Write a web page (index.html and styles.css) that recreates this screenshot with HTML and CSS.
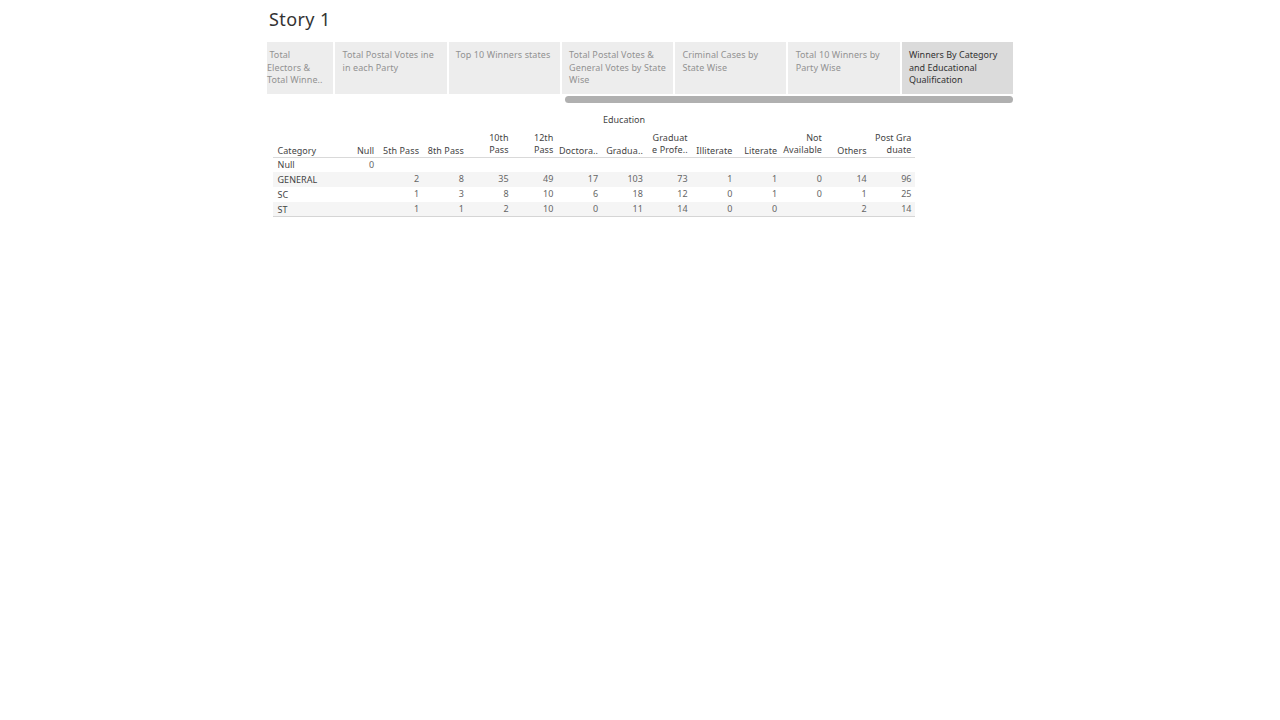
FILE: index.html
```html
<!DOCTYPE html>
<html lang="en">
<head>
<meta charset="utf-8">
<title>Story 1</title>
<link rel="stylesheet" href="styles.css">
</head>
<body>
<main class="story">
  <h1 class="title">Story 1</h1>
  <nav class="tabs">
    <div class="tab first">&nbsp;Total<br>Electors &amp;<br>Total Winne..</div>
    <div class="tab">Total Postal Votes ine<br>in each Party</div>
    <div class="tab">Top 10 Winners states</div>
    <div class="tab">Total Postal Votes &amp;<br>General Votes by State<br>Wise</div>
    <div class="tab">Criminal Cases by<br>State Wise</div>
    <div class="tab">Total 10 Winners by<br>Party Wise</div>
    <div class="tab active">Winners By Category<br>and Educational<br>Qualification</div>
  </nav>
  <div class="scroll"></div>
  <section class="sheet">
    <div class="caption">Education</div>
    <div class="row head"><b>Category</b><span>Null</span><span>5th Pass</span><span>8th Pass</span><span class="two">10th<br>Pass</span><span class="two">12th<br>Pass</span><span>Doctora..</span><span>Gradua..</span><span class="two">Graduat<br>e Profe..</span><span>Illiterate</span><span>Literate</span><span class="two">Not<br>Available</span><span>Others</span><span class="two">Post Gra<br>duate</span></div>
    <div class="row short"><b>Null</b><span>0</span><span></span><span></span><span></span><span></span><span></span><span></span><span></span><span></span><span></span><span></span><span></span><span></span></div>
    <div class="row band"><b>GENERAL</b><span></span><span>2</span><span>8</span><span>35</span><span>49</span><span>17</span><span>103</span><span>73</span><span>1</span><span>1</span><span>0</span><span>14</span><span>96</span></div>
    <div class="row"><b>SC</b><span></span><span>1</span><span>3</span><span>8</span><span>10</span><span>6</span><span>18</span><span>12</span><span>0</span><span>1</span><span>0</span><span>1</span><span>25</span></div>
    <div class="row band"><b>ST</b><span></span><span>1</span><span>1</span><span>2</span><span>10</span><span>0</span><span>11</span><span>14</span><span>0</span><span>0</span><span></span><span>2</span><span>14</span></div>
  </section>
</main>
</body>
</html>
```
FILE: styles.css
```css
body { margin: 0; background: #fff; font-family: "Noto Sans", "Open Sans", sans-serif; font-size: 9px; color: #444; }
.story { width: 746px; margin: 0 auto; }
.title { margin: 0; height: 42px; padding-left: 2px; box-sizing: border-box; font-size: 18px; line-height: 39px; font-weight: 400; letter-spacing: 0.4px; color: #333; }
.tabs { display: grid; grid-template-columns: 66.4px repeat(6, 1fr); column-gap: 2px; height: 52px; }
.tab { background: #ededed; color: #929292; padding: 7px 0 0 7.2px; line-height: 12.5px; white-space: nowrap; letter-spacing: 0.08px; }
.tab.first { padding-left: 0; }
.tab.active { background: #dbdbdb; color: #333; letter-spacing: 0; }
.scroll { width: 448px; height: 6.5px; margin: 2px 0 0 auto; border-radius: 4px; background: #b0b0b0; }
.sheet { width: 642px; margin: 9.5px 0 0 6px; }
.caption { height: 20px; line-height: 16px; padding-left: 60px; text-align: center; }
.row { display: grid; grid-template-columns: 60px repeat(13, 1fr); height: 15px; line-height: 15px; white-space: nowrap; }
.row b { font-weight: 400; padding-left: 4.5px; color: #444; letter-spacing: 0.05px; }
.row span { text-align: right; padding-right: 3.5px; color: #666; line-height: 14px; }
.row.head { height: 25px; border-bottom: 1px solid #d9d9d9; align-items: end; line-height: 12px; }
.row.head span { color: #444; line-height: 12px; letter-spacing: 0.08px; }
.row.head .two { padding-bottom: 1px; }
.row.short { height: 14px; }
.row.short b { line-height: 14px; }
.band { background: #f5f5f5; }
.row:last-child { border-bottom: 1px solid #d5d5d5; height: 14px; }
```
